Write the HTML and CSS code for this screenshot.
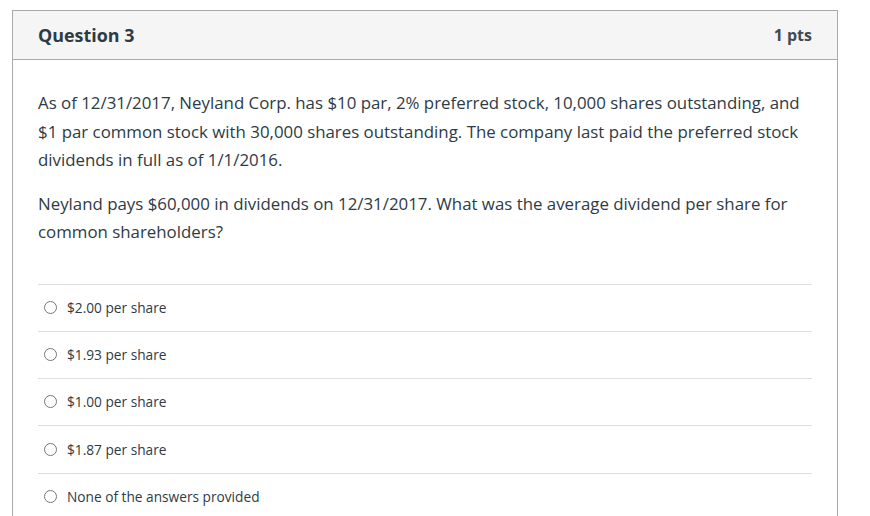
FILE: index.html
```html
<!DOCTYPE html>
<html>
<head>
<meta charset="utf-8">
<link rel="stylesheet" href="styles.css">
</head>
<body>
<div class="question">
  <div class="q-header">
    <span class="q-name">Question 3</span>
    <span class="q-points">1 pts</span>
  </div>
  <div class="q-body">
    <p>As of 12/31/2017, Neyland Corp. has $10 par, 2% preferred stock, 10,000 shares outstanding, and $1 par common stock with 30,000 shares outstanding. The company last paid the preferred stock dividends in full as of 1/1/2016.</p>
    <p>Neyland pays $60,000 in dividends on 12/31/2017. What was the average dividend per share for common shareholders?</p>
    <div class="answers">
      <label class="answer"><span class="radio"></span><span>$2.00 per share</span></label>
      <label class="answer"><span class="radio"></span><span>$1.93 per share</span></label>
      <label class="answer"><span class="radio"></span><span>$1.00 per share</span></label>
      <label class="answer"><span class="radio"></span><span>$1.87 per share</span></label>
      <label class="answer"><span class="radio"></span><span>None of the answers provided</span></label>
    </div>
  </div>
</div>
</body>
</html>
```
FILE: styles.css
```css
html, body {
  margin: 0;
  padding: 0;
  background: #fff;
}
body {
  font-family: "Open Sans", "Noto Sans", sans-serif;
  color: #2d3b45;
}
.question {
  margin: 10px 0 0 12px;
  width: 826px;
  box-sizing: border-box;
  border: 1px solid #aaaaaa;
  border-bottom: none;
  height: 520px;
}
.q-header {
  height: 48px;
  background: #f5f5f5;
  border-bottom: 1px solid #aaaaaa;
  display: flex;
  align-items: center;
  justify-content: space-between;
  padding: 0 25px;
  font-weight: 700;
}
.q-name {
  color: #2d3b45;
  font-size: 17.9px;
}
.q-points {
  color: #3d4b55;
  font-size: 16px;
}
.q-body {
  padding: 29px 25px 0 25px;
}
.q-body p {
  margin: 0 0 15px 0;
  font-size: 16.85px;
  line-height: 28.5px;
}
.answers {
  margin-top: 37px;
}
.answer {
  display: flex;
  align-items: center;
  height: 47.33px;
  box-sizing: border-box;
  border-top: 1px solid #dddddd;
  font-size: 13.7px;
  padding-left: 6px;
  padding-bottom: 1px;
}
.radio {
  width: 13px;
  height: 13px;
  box-sizing: border-box;
  border: 1px solid #777;
  border-radius: 50%;
  margin-right: 10px;
  flex: none;
}
```
